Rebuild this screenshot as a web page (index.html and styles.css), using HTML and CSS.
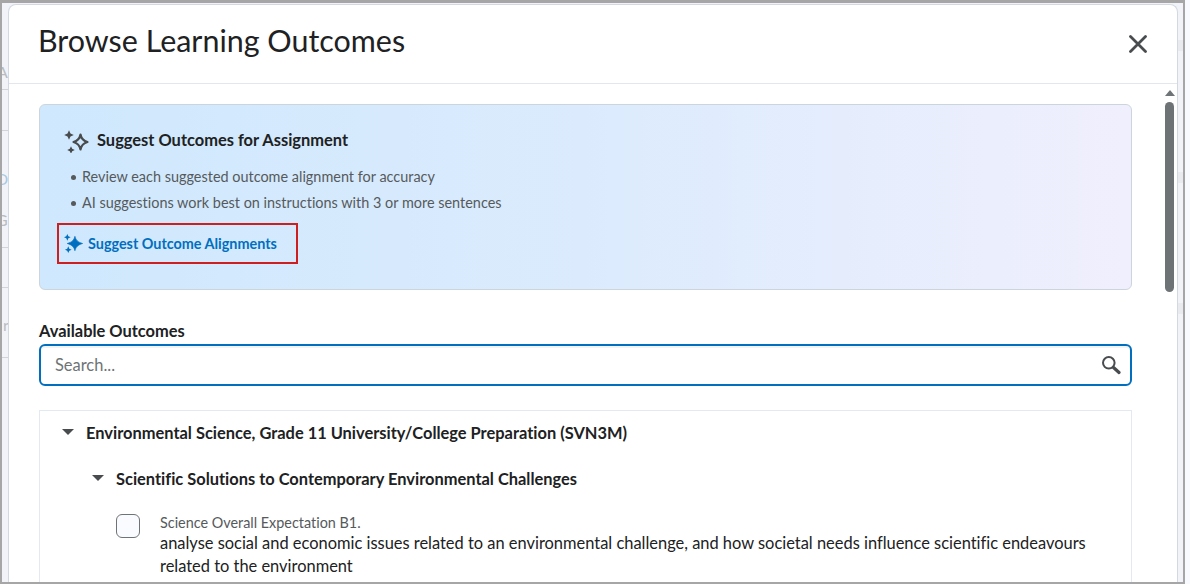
FILE: index.html
```html
<!DOCTYPE html>
<html lang="en">
<head>
<meta charset="utf-8">
<title>Browse Learning Outcomes</title>
<link rel="stylesheet" href="styles.css">
</head>
<body>
<div class="frame">
  <div class="backdrop">
    <span class="bg-letter bg-a">A</span>
    <span class="bg-letter bg-d">D</span>
    <span class="bg-letter bg-g">G</span>
    <span class="bg-letter bg-r">r</span>
    <i class="bg-line l1"></i><i class="bg-line l2"></i><i class="bg-line l3"></i><i class="bg-line l4"></i><i class="bg-line l5"></i>
    <i class="bg-band b1"></i><i class="bg-band b2"></i><i class="bg-band b3"></i>
    <section class="dialog">
      <header class="dialog-head">
        <h1>Browse Learning Outcomes</h1>
        <svg class="close" viewBox="0 0 18 18" aria-label="Close"><path d="M1.500 1.500l15 15M16.500 1.500l-15 15" fill="none" stroke="#494c4e" stroke-width="2.800" stroke-linecap="round"/></svg>
      </header>
      <div class="dialog-body">
        <div class="content">
          <div class="suggest">
            <div class="suggest-title">
              <svg class="spark" viewBox="0 0 26 26"><path d="M16.500 7.500C17.300 11.500 19.500 14 23.500 15 19.500 16 17.300 18.500 16.500 22.500 15.700 18.500 13.500 16 9.500 15 13.500 14 15.700 11.500 16.500 7.500z" fill="none" stroke="#494c4e" stroke-width="2.200" stroke-linejoin="round"/><path d="M5 3.200l1.500 3.300 3.300 1.500-3.300 1.500-1.500 3.300-1.500-3.300-3.300-1.500 3.300-1.500zM7 19.200l1.200 2.600 2.600 1.200-2.600 1.200-1.200 2.600-1.200-2.600-2.600-1.200 2.600-1.200z" fill="#494c4e"/></svg>
              <h2>Suggest Outcomes for Assignment</h2>
            </div>
            <ul>
              <li>Review each suggested outcome alignment for accuracy</li>
              <li>AI suggestions work best on instructions with 3 or more sentences</li>
            </ul>
            <a class="suggest-link" href="#">
              <svg class="spark-small" viewBox="0 0 20 20"><path d="M11.500 2.500C12.500 6.500 14.500 8.500 19.500 10 14.500 11.500 12.500 13.500 11.500 17.500 10.500 13.500 8.500 11.500 3.500 10 8.500 8.500 10.500 6.500 11.500 2.500z" fill="#006fbf" stroke="#006fbf" stroke-width=".8" stroke-linejoin="round"/><path d="M3.500 0l1.100 2.400 2.400 1.100-2.400 1.100-1.100 2.400-1.100-2.400-2.400-1.100 2.400-1.100zM4.500 13l1.100 2.400 2.400 1.100-2.400 1.100-1.100 2.400-1.100-2.400-2.400-1.100 2.400-1.100z" fill="#006fbf"/></svg>
              <span>Suggest Outcome Alignments</span>
            </a>
          </div>
          <label class="avail">Available Outcomes</label>
          <div class="search">
            <span class="placeholder">Search...</span>
            <svg class="mag" viewBox="0 0 20 20"><circle cx="7.800" cy="7.800" r="5.800" fill="none" stroke="#494c4e" stroke-width="2"/><path d="M12.500 12.500l5.500 5" fill="none" stroke="#494c4e" stroke-width="3.200" stroke-linecap="round"/></svg>
          </div>
          <div class="tree">
            <div class="node level-1"><i class="caret"></i><span>Environmental Science, Grade 11 University/College Preparation (SVN3M)</span></div>
            <div class="node level-2"><i class="caret"></i><span>Scientific Solutions to Contemporary Environmental Challenges</span></div>
            <div class="leaf">
              <span class="check"></span>
              <div class="leaf-text">
                <div class="code">Science Overall Expectation B1.</div>
                <p>analyse social and economic issues related to an environmental challenge, and how societal needs influence scientific endeavours related to the environment</p>
              </div>
            </div>
          </div>
        </div>
        <div class="scroll">
          <i class="scroll-up"></i>
          <i class="scroll-thumb"></i>
        </div>
      </div>
    </section>
  </div>
</div>
</body>
</html>
```
FILE: styles.css
```css
* { box-sizing: border-box; }
html, body { margin: 0; height: 100%; overflow: hidden; }
body { font-family: Lato, "Open Sans", sans-serif; font-variant-ligatures: none; color: #202122; background: #f9faff; }
.frame { width: 1185px; height: 584px; padding: 3px 2px 2px 2px; background: #a6a6a6; }
.backdrop { position: relative; height: 100%; background: #f1f3f8; padding: 1px 5px 0 6px; overflow: hidden; }
.bg-letter { position: absolute; font-size: 16px; line-height: 20px; color: #b9bdc1; }
.bg-a { top: 59px; left: -5px; }
.bg-d { top: 166px; left: -6px; color: #a9c8e2; }
.bg-g { top: 207px; left: -6px; }
.bg-r { top: 312px; left: 1px; }
.bg-line { position: absolute; left: 0; width: 6px; height: 1px; background: #d0d3d7; }
.l1 { top: 86px; } .l2 { top: 127px; } .l3 { top: 244px; } .l4 { top: 284px; } .l5 { top: 354px; }
.bg-band { position: absolute; right: 0; width: 5px; height: 11px; background: #e8eaef; }
.b1 { top: 37px; } .b2 { top: 169px; } .b3 { top: 300px; }
.dialog { position: relative; height: 100%; background: #fff; border: 1px solid #d3d9e3; border-bottom: 0; border-radius: 8px 8px 0 0; overflow: hidden; display: flex; flex-direction: column; }
.dialog-head { height: 79px; flex: none; display: flex; align-items: flex-start; justify-content: space-between; padding: 0 30px 0 29px; border-bottom: 1px solid #e3e6ea; }
h1 { margin: 14px 0 0; font-size: 30.450px; line-height: 42px; font-weight: 400; color: #202122; }
.close { width: 18px; height: 18px; margin-top: 30px; }
.dialog-body { flex: 1; display: flex; min-height: 0; overflow: hidden; }
.content { flex: none; width: 1123px; padding: 20px 0 0 30px; }
.suggest { width: 1093px; height: 186px; border: 1px solid #cdd5dc; border-radius: 6px; background: linear-gradient(90deg, #cfe8fd 0%, #dbebfd 50%, #f0effd 100%); padding: 22px 0 0 24px; }
.suggest-title { display: flex; align-items: center; gap: 7px; }
.spark { width: 26px; height: 26px; }
h2 { margin: 0; font-size: 16.450px; line-height: 24px; font-weight: 700; color: #202122; }
ul { list-style: none; margin: 11px 0 0; padding: 0 0 0 6px; }
li { font-size: 14.450px; line-height: 26px; color: #565a5c; padding-left: 12px; position: relative; }
li::before { content: ""; position: absolute; left: 1px; top: 11px; width: 5px; height: 5px; border-radius: 50%; background: #565a5c; }
.suggest-link { display: flex; align-items: center; gap: 5px; width: 241px; height: 41px; margin: 7px 0 0 -7px; border: 2px solid #cd1f1f; padding: 0 0 1px 5px; text-decoration: none; color: #006fbf; font-size: 14.400px; font-weight: 700; }
.spark-small { width: 19px; height: 19px; }
.avail { display: block; margin-top: 31px; font-size: 16.450px; line-height: 20px; font-weight: 700; color: #202122; }
.search { width: 1093px; height: 42px; margin-top: 3px; border: 2px solid #006fbf; border-radius: 6px; display: flex; align-items: center; justify-content: space-between; padding: 0 9px 0 14px; background: #fff; box-shadow: inset 0 2px 0 #f3f4f5; }
.placeholder { font-size: 16.450px; color: #6e7376; }
.mag { width: 20px; height: 20px; }
.tree { width: 1093px; height: 300px; margin-top: 24px; border: 1px solid #e3e9f1; padding: 0 0 0 22px; }
.node { display: flex; align-items: center; font-size: 16.430px; font-weight: 700; color: #202122; }
.level-1 { margin-top: 10px; height: 22px; gap: 12px; }
.level-2 { margin-top: 24px; height: 22px; gap: 12px; padding-left: 30px; }
.caret { width: 0; height: 0; border-left: 6px solid transparent; border-right: 6px solid transparent; border-top: 6px solid #494c4e; }
.leaf { display: flex; margin: 25px 0 0 54px; }
.check { width: 24px; height: 24px; flex: none; border: 1px solid #6e7376; border-radius: 6px; background: #f9fbff; }
.leaf-text { margin-left: 20px; width: 950px; padding-top: 1px; }
.code { font-size: 14.400px; line-height: 15px; color: #565a5c; }
p { margin: 1px 0 0; font-size: 16.430px; line-height: 23px; color: #202122; }
.scroll { flex: 1; position: relative; }
.scroll-up { position: absolute; left: 33px; top: 6px; width: 0; height: 0; border-left: 5px solid transparent; border-right: 5px solid transparent; border-bottom: 6px solid #6e7376; }
.scroll-thumb { position: absolute; left: 33px; top: 18px; width: 9px; height: 190px; border-radius: 5px; background: #6e7376; }
```
